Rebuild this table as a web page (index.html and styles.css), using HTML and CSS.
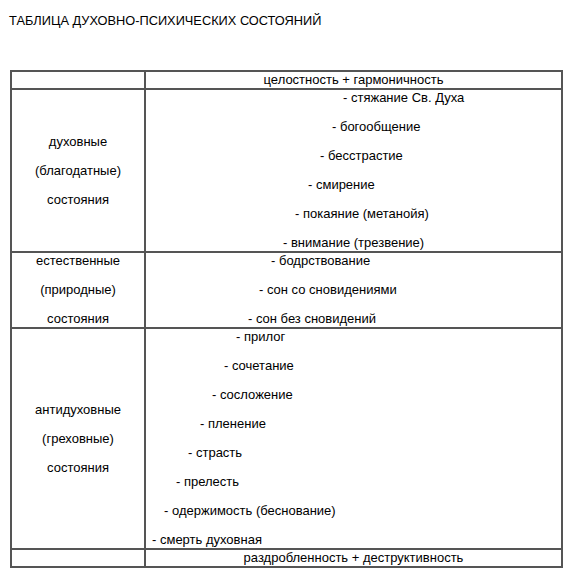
FILE: index.html
```html
<!DOCTYPE html>
<html lang="ru">
<head>
<meta charset="utf-8">
<title>Таблица духовно-психических состояний</title>
<link rel="stylesheet" href="styles.css">
</head>
<body>
<p class="title">ТАБЛИЦА ДУХОВНО-ПСИХИЧЕСКИХ СОСТОЯНИЙ</p>
<table class="states">
  <tr>
    <td class="kind"></td>
    <td class="pole">целостность + гармоничность</td>
  </tr>
  <tr>
    <td class="kind"><p>духовные</p><p>(благодатные)</p><p>состояния</p></td>
    <td class="list">
      <p class="k16">- стяжание Св. Духа</p>
      <p class="k15">- богообщение</p>
      <p class="k14">- бесстрастие</p>
      <p class="k13">- смирение</p>
      <p class="k12">- покаяние (метанойя)</p>
      <p class="k11">- внимание (трезвение)</p>
    </td>
  </tr>
  <tr>
    <td class="kind"><p>естественные</p><p>(природные)</p><p>состояния</p></td>
    <td class="list">
      <p class="k10">- бодрствование</p>
      <p class="k9">- сон со сновидениями</p>
      <p class="k8">- сон без сновидений</p>
    </td>
  </tr>
  <tr>
    <td class="kind"><p>антидуховные</p><p>(греховные)</p><p>состояния</p></td>
    <td class="list">
      <p class="k7">- прилог</p>
      <p class="k6">- сочетание</p>
      <p class="k5">- сосложение</p>
      <p class="k4">- пленение</p>
      <p class="k3">- страсть</p>
      <p class="k2">- прелесть</p>
      <p class="k1">- одержимость (беснование)</p>
      <p class="k0">- смерть духовная</p>
    </td>
  </tr>
  <tr>
    <td class="kind"></td>
    <td class="pole">раздробленность + деструктивность</td>
  </tr>
</table>
</body>
</html>
```

FILE: styles.css
```css
html, body {
  margin: 0;
  padding: 0;
  background: #ffffff;
}

body {
  font-family: Arial, "Liberation Sans", sans-serif;
  font-size: 13px;
  color: #000000;
}

.title {
  margin: 13px 0 0 9px;
  line-height: 16px;
  font-size: 12.8px;
}

.states {
  margin: 41px 0 0 10px;
  width: 553px;
  border: 1px solid #555555;
  border-spacing: 0;
  border-collapse: separate;
  table-layout: fixed;
}

.states td {
  border: 1px solid #555555;
  padding: 0;
  line-height: 16px;
}

.states td.kind {
  width: 132px;
  text-align: center;
  vertical-align: middle;
}

.states td.pole {
  text-align: center;
  height: 16px;
}

.states td.list {
  vertical-align: top;
  text-align: left;
}

.states p {
  margin: 13px 0;
  white-space: nowrap;
}

.states p:first-child { margin-top: 0; }
.states p:last-child { margin-bottom: 0; }

.k0  { padding-left: 6px; }
.k1  { padding-left: 18px; }
.k2  { padding-left: 30px; }
.k3  { padding-left: 42px; }
.k4  { padding-left: 54px; }
.k5  { padding-left: 66px; }
.k6  { padding-left: 78px; }
.k7  { padding-left: 90px; }
.k8  { padding-left: 102px; }
.k9  { padding-left: 113px; }
.k10 { padding-left: 125px; }
.k11 { padding-left: 137px; }
.k12 { padding-left: 149px; }
.k13 { padding-left: 162px; }
.k14 { padding-left: 174px; }
.k15 { padding-left: 186px; }
.k16 { padding-left: 197px; }
```
